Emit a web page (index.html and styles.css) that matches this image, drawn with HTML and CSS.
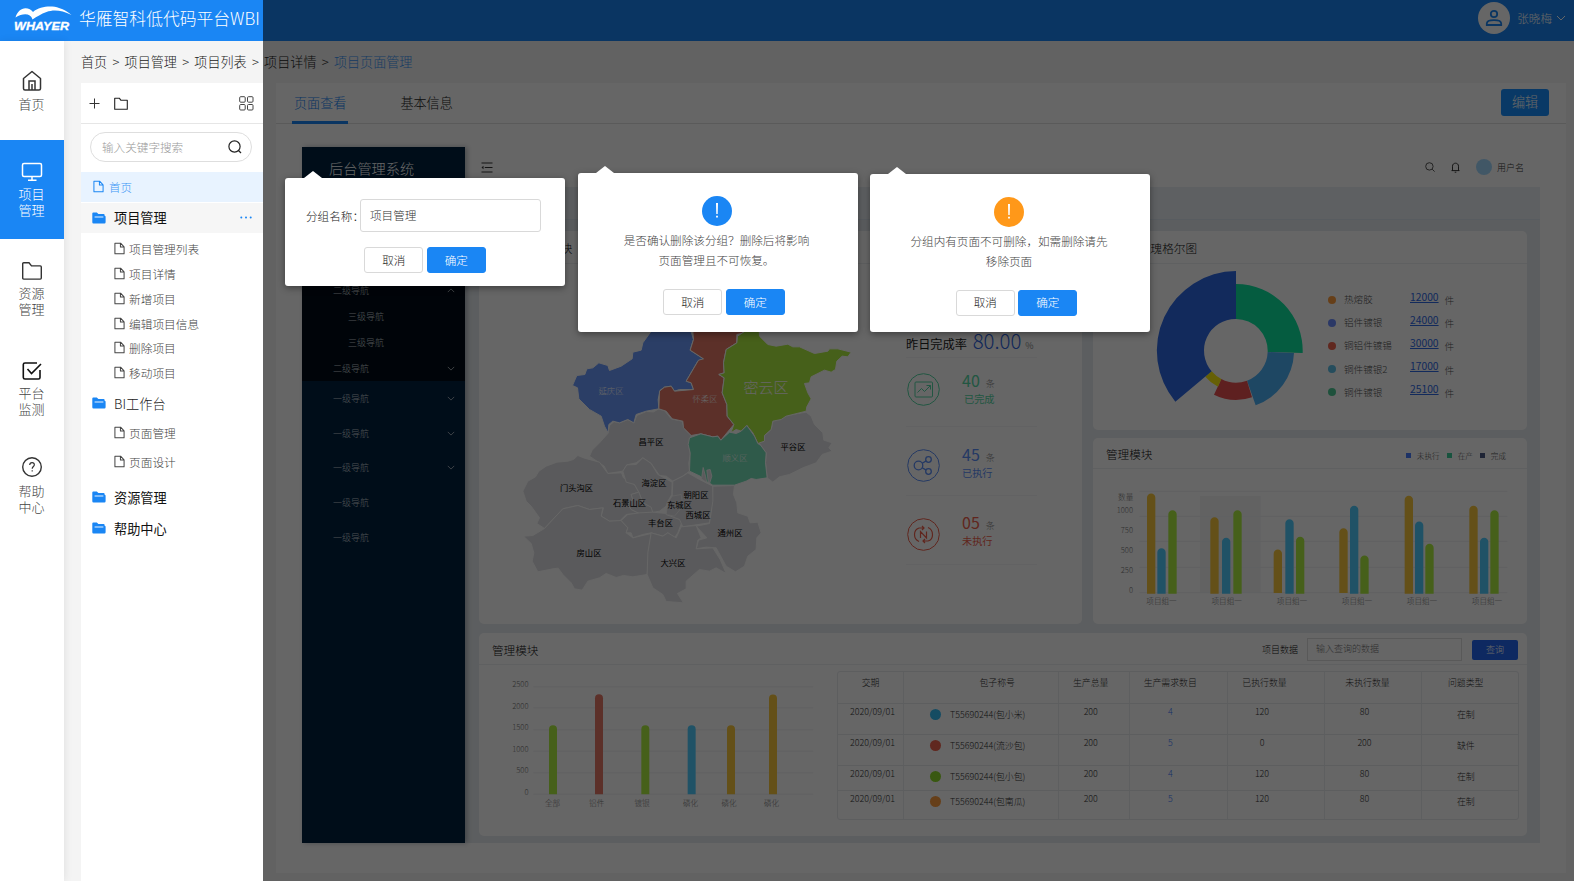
FILE: index.html
```html
<!DOCTYPE html>
<html lang="zh-CN">
<head>
<meta charset="utf-8">
<title>华雁智科低代码平台WBI</title>
<link rel="stylesheet" href="styles.css">
</head>
<body>
<svg class="defs" width="0" height="0" aria-hidden="true">
  <symbol id="doc" viewBox="0 0 12 14"><path d="M1 1.2h6.2l3.8 4v7.6H1zM7 1.4v4h4" fill="none" stroke="currentColor" stroke-width="1.1" stroke-linejoin="round"/></symbol>
  <symbol id="fold" viewBox="0 0 14 12"><path d="M.3 1.6Q.3.4 1.400.4h3.400l1.600 1.500h5.200q1 0 1 1v.8q1 0 1 1v5.600q0 1.200-1.200 1.200H1.500q-1.200 0-1.200-1.200z" fill="#1a86f4"/><path d="M2.600 5h8.800" stroke="#fff" stroke-width=".9"/></symbol>
  <symbol id="down" viewBox="0 0 10 6"><path d="M1 1l4 4 4-4" fill="none" stroke="currentColor" stroke-width="1"/></symbol>
</svg>
<div class="app">
  <header class="top">
    <svg class="logo" width="60" height="26" viewBox="0 0 60 26"><path d="M1.500 11.500C3 6 7 2.200 11.500 2.200c3 0 6 1.600 7.500 3.800C26 0 38-.5 45 2c5 1.500 9.500 4.200 12.500 7-10-5-18-5.500-25-3C27 8 23 10.500 18.500 13.500 16.500 7 9 7 1.500 11.500z" fill="#fff"/><text x="0" y="24" textLength="55" lengthAdjust="spacingAndGlyphs" class="logo-text">WHAYER</text></svg>
    <h1>华雁智科低代码平台WBI</h1>
    <div class="user">
      <span class="avatar"><svg width="18" height="18" viewBox="0 0 18 18" fill="none" stroke="#1a86f4" stroke-width="1.800"><circle cx="9" cy="5" r="3.200"/><path d="M1.800 16v-1.500c0-4.500 14.400-4.500 14.400 0V16z"/></svg></span>
      <span>张晓梅</span>
      <svg width="10" height="6"><use href="#down"/></svg>
    </div>
  </header>
  <div class="body">
    <nav class="rail">
      <a class="n1"><svg width="22" height="22" viewBox="0 0 22 22" fill="none" stroke="#333" stroke-width="1.500"><path d="M2.500 8.500L11 1.500l8.500 7V18.500q0 1.500-1.500 1.500H4q-1.500 0-1.500-1.500z" stroke-linejoin="round"/><path d="M8 20v-9h6v9M11 20v-6"/></svg><span>首页</span></a>
      <a class="on"><svg width="22" height="22" viewBox="0 0 22 22" fill="none" stroke="#fff" stroke-width="1.500"><rect x="1.500" y="2.500" width="19" height="13" rx="1.500"/><path d="M11 16v3M7 19.300h8.500"/></svg><span>项目<br>管理</span></a>
      <a class="n3"><svg width="22" height="22" viewBox="0 0 22 22" fill="none" stroke="#333" stroke-width="1.400"><path d="M1.700 3.700q0-1 1-1H8l2.500 3.200h8.800q1 0 1 1v11.200q0 1-1 1H2.700q-1 0-1-1z"/></svg><span>资源<br>管理</span></a>
      <a class="n4"><svg width="22" height="22" viewBox="0 0 22 22" fill="none" stroke="#111" stroke-width="1.600"><path d="M16 3H4Q2.300 3 2.300 4.500v13Q2.300 19 4 19h13.500q1.500 0 1.500-1.500V10M6.500 9l4 4.500L20 4"/></svg><span>平台<br>监测</span></a>
      <a class="n5"><svg width="22" height="22" viewBox="0 0 22 22" fill="none" stroke="#333" stroke-width="1.400"><circle cx="11" cy="11" r="9.300"/><path d="M8.700 9c.2-3.400 5-3 4.600 0-.2 1.500-2.100 1.600-2.100 3.800M11.200 14.200v1.400" stroke-width="1.200"/></svg><span>帮助<br>中心</span></a>
    </nav>
    <main>
      <div class="crumb"><span>首页</span><i>&gt;</i><span>项目管理</span><i>&gt;</i><span>项目列表</span><i>&gt;</i><span>项目详情</span><i>&gt;</i><span class="cur">项目页面管理</span></div>
      <div class="cols">
        <aside class="tree">
          <div class="tools">
            <svg width="11" height="11" viewBox="0 0 11 11" stroke="#333" stroke-width="1"><path d="M.500 5.500h10M5.500.500v10"/></svg>
            <svg class="t2" width="14" height="13" viewBox="0 0 14 13" fill="none" stroke="#222" stroke-width="1.100"><path d="M.700 1.200h4.600l1.500 2h6.500v9H.700z" stroke-linejoin="round"/></svg>
            <svg class="t3" width="15" height="15" viewBox="0 0 15 15" fill="none" stroke="#444" stroke-width="1"><rect x=".700" y=".700" width="5.500" height="5.500" rx="1"/><rect x="8.500" y=".700" width="5.500" height="5.500" rx="1"/><rect x=".700" y="8.500" width="5.500" height="5.500" rx="1"/><rect x="8.500" y="8.500" width="5.500" height="5.500" rx="1"/></svg>
          </div>
          <div class="search"><span>输入关键字搜索</span><svg width="14" height="14" viewBox="0 0 14 14" fill="none" stroke="#222" stroke-width="1.200"><circle cx="6.500" cy="6.500" r="5.600"/><path d="M10.500 10.500l2.500 2.500"/></svg></div>
          <div class="home"><svg width="11" height="13"><use href="#doc"/></svg>首页</div>
          <div class="folder hot"><svg width="14" height="12"><use href="#fold"/></svg>项目管理<svg class="more" width="12" height="3" viewBox="0 0 12 3" fill="#1a86f4"><circle cx="1.300" cy="1.500" r="1"/><circle cx="6" cy="1.500" r="1"/><circle cx="10.700" cy="1.500" r="1"/></svg></div>
          <ul class="leafs">
            <li><svg width="11" height="13"><use href="#doc"/></svg>项目管理列表</li>
            <li><svg width="11" height="13"><use href="#doc"/></svg>项目详情</li>
            <li><svg width="11" height="13"><use href="#doc"/></svg>新增项目</li>
            <li><svg width="11" height="13"><use href="#doc"/></svg>编辑项目信息</li>
            <li><svg width="11" height="13"><use href="#doc"/></svg>删除项目</li>
            <li><svg width="11" height="13"><use href="#doc"/></svg>移动项目</li>
          </ul>
          <div class="folder thin"><svg width="14" height="12"><use href="#fold"/></svg>BI工作台</div>
          <ul class="leafs wide">
            <li><svg width="11" height="13"><use href="#doc"/></svg>页面管理</li>
            <li><svg width="11" height="13"><use href="#doc"/></svg>页面设计</li>
          </ul>
          <div class="folder"><svg width="14" height="12"><use href="#fold"/></svg>资源管理</div>
          <div class="folder"><svg width="14" height="12"><use href="#fold"/></svg>帮助中心</div>
        </aside>
        <section class="page">
          <div class="tabs"><span class="tab on">页面查看</span><span class="tab">基本信息</span><button class="edit">编辑</button></div>
          <div class="dash">
            <div class="side">
              <h2>后台管理系统</h2>
              <div class="sub">
                <p>二级导航<svg class="up" width="8" height="5"><use href="#down"/></svg></p>
                <p class="deep">三级导航</p>
                <p class="deep">三级导航</p>
                <p>二级导航<svg width="8" height="5"><use href="#down"/></svg></p>
              </div>
              <p>一级导航<svg width="8" height="5"><use href="#down"/></svg></p>
              <p>一级导航<svg width="8" height="5"><use href="#down"/></svg></p>
              <p>一级导航<svg width="8" height="5"><use href="#down"/></svg></p>
              <p>一级导航</p>
              <p>一级导航</p>
            </div>
            <div class="work">
              <div class="bar">
                <svg width="12" height="11" viewBox="0 0 12 11" stroke="#333" stroke-width="1.100" fill="#333"><path d="M.500 1h11M3.800 5.500h7.700M.500 10h11"/><path d="M2.500 3.800v3.400L.500 5.500z" stroke="none"/></svg>
                <svg class="b1" width="10" height="10" viewBox="0 0 10 10" fill="none" stroke="#444" stroke-width=".9"><circle cx="4.400" cy="4.400" r="3.700"/><path d="M7.200 7.200L9.600 9.600"/></svg>
                <svg class="b2" width="9" height="11" viewBox="0 0 9 11" fill="none" stroke="#222" stroke-width=".9"><path d="M.500 8.600h8M1.500 8.500V4.200c0-4 6-4 6 0v4.300M3.700 10.200h1.600"/></svg>
                <i class="face"></i><span>用户名</span>
              </div>
              <div class="band"></div>
              <div class="cards">
                <section class="card area">
                  <h3 class="mapt">管理模块</h3>
                  <div class="arearow">
                    <svg class="map" width="390" height="355" viewBox="479 264 390 355">
                      <g transform="translate(499.500 319.500) scale(.33333)" stroke="#fff" stroke-width="3" stroke-linejoin="round" fill="#e1e1e5">
                        <path d="M270 410L278 392 300 370 325 342 330 318 344 306 360 310 385 300 403 310 412 288 440 276 462 277 478 268 495 273 515 298 548 305 555 328 575 348 568 375 573 405 568 430 570 455 550 470 520 485 500 470 480 468 455 432 430 415 410 430 382 436 370 455 325 462 314 440 292 425z"/>
                        <path d="M70 515L85 485 108 472 118 455 140 440 172 428 205 425 222 420 235 408 255 416 300 428 325 462 366 460 372 475 405 495 418 518 395 525 400 540 385 555 395 570 420 582 380 585 360 605 330 605 305 590 312 565 270 570 235 558 190 568 160 600 135 627 112 612 120 595 95 560 80 545z"/>
                        <path d="M72 650L100 648 135 627 160 600 190 568 235 558 270 570 310 565 305 590 330 605 365 603 385 625 380 640 400 655 455 642 450 680 443 765 400 772 372 768 350 774 320 762 300 775 265 785 248 812 225 808 215 790 190 765 176 746 160 748 115 757 98 725 103 700 95 672z"/>
                        <path d="M370 455L382 436 410 435 430 415 455 432 475 465 518 488 517 525 505 545 500 560 480 575 455 580 430 550 418 518 405 495 380 488z"/>
                        <path d="M395 525L418 518 430 550 455 563 460 580 420 582 395 570 385 555 400 540z"/>
                        <path d="M365 603L385 585 420 580 460 578 500 582 550 600 535 640 525 655 505 640 490 650 455 640 430 645 400 655 395 640 380 640 385 625z"/>
                        <path d="M520 485L550 470 565 460 600 480 640 500 642 545 630 610 550 622 540 600 500 585 505 550 518 530z"/>
                        <path d="M518 530L545 525 550 560 525 590 500 585 505 550z" stroke-width="2"/>
                        <path d="M640 500L705 498 702 525 712 550 715 580 745 590 752 610 775 608 785 640 772 655 770 690 745 710 735 740 708 757 680 740 650 685 620 683 590 688 597 662 622 655 590 620 630 612 640 545z"/>
                        <path d="M455 640L490 650 505 640 530 655 545 622 590 618 605 655 595 662 590 688 640 685 662 720 680 762 650 745 630 755 600 750 560 785 560 808 534 822 552 850 500 846 490 825 460 805 443 765 445 700z"/>
                        <path d="M780 372L795 348 815 330 820 305 860 288 920 278 935 290 945 315 970 340 973 362 998 370 988 385 998 395 968 405 950 430 910 445 870 465 840 472 820 488 803 475 798 430 800 400z"/>
                        <path fill="#6b9bff" d="M219 198L232 168 256 165 262 148 280 145 298 130 325 138 330 153 365 140 398 118 400 98 425 92 430 70 453 38 453 10 560 10 576 40 582 60 572 92 612 118 595 125 560 185 575 190 582 210 540 210 525 215 515 200 495 203 482 212 476 240 478 268 440 275 410 285 403 310 385 300 360 310 340 305 328 315 326 340 315 320 305 290 270 270 238 238 234 205z"/>
                        <path fill="#e67867" d="M578 10L735 10 735 40 712 45 712 70 680 90 672 130 674 160 658 165 674 175 668 220 682 255 683 290 703 315 664 362 655 350 640 352 604 343 575 348 552 325 550 305 518 298 500 275 478 268 480 215 495 203 515 200 525 215 582 210 575 190 560 185 597 122 612 118 572 92 582 60z"/>
                        <path fill="#aff043" d="M712 70L714 50 735 36 735 10 778 10 780 50 805 75 830 80 865 74 880 82 900 82 945 102 985 95 990 88 1015 88 1055 98 1045 112 1028 110 1012 125 1008 150 995 158 975 152 935 172 930 190 915 192 925 220 935 238 922 262 920 275 860 290 845 300 820 305 815 330 795 348 795 365 775 372 760 340 742 318 725 335 710 330 694 340 703 315 683 290 682 255 668 220 674 175 658 165 674 160 672 130 680 90z"/>
                        <path fill="#76e1b9" d="M570 355L604 343 640 352 655 350 664 362 690 338 710 342 725 335 742 318 765 350 775 372 784 378 800 400 798 430 803 475 770 480 755 477 740 485 705 497 640 497 628 490 610 480 602 470 570 455 572 400 566 375z"/>
                        <path d="M606 478L611 444 618 470 622 490zM622 452L632 450 637 470 630 493 626 485z" stroke-width="2.500"/>
                      </g>
                      <g class="mlabel">
                        <text x="611" y="393.500" class="lt">延庆区</text><text x="705" y="402" class="lt">怀柔区</text><text x="766" y="392.500" class="big">密云区</text><text x="735" y="461" class="lt">顺义区</text>
                        <text x="651" y="445">昌平区</text><text x="793" y="449.500">平谷区</text><text x="576.500" y="491">门头沟区</text><text x="654" y="486">海淀区</text><text x="629.500" y="505.500">石景山区</text><text x="696" y="497.500">朝阳区</text><text x="679.500" y="507.500">东城区</text><text x="698" y="518">西城区</text><text x="660.500" y="526">丰台区</text><text x="730" y="536">通州区</text><text x="589" y="555.500">房山区</text><text x="673" y="565.500">大兴区</text>
                      </g>
                    </svg>
                    <div class="stats">
                      <p class="rate">昨日完成率 <b>80.00</b> <small>%</small></p>
                      <div class="stat g"><svg width="33" height="33" viewBox="0 0 33 33" fill="none" stroke="currentColor"><circle cx="16.500" cy="16.500" r="15.800"/><rect x="8" y="9" width="17.500" height="15" rx="1"/><path d="M10.500 19.500l4-4 3 3 6-6M19.500 12.500h4v4"/></svg><div><b>40</b><small>条</small><em>已完成</em></div></div>
                      <div class="stat b"><svg width="33" height="33" viewBox="0 0 33 33" fill="none" stroke="currentColor"><circle cx="16.500" cy="16.500" r="15.800"/><g stroke-width="1.300"><circle cx="11.500" cy="16.500" r="4.300"/><circle cx="21.500" cy="10.500" r="2.800"/><circle cx="21.500" cy="22.500" r="2.800"/><path d="M15.200 14.300l4-2.400M15.200 18.700l4 2.400"/></g></svg><div><b>45</b><small>条</small><em>已执行</em></div></div>
                      <div class="stat r"><svg width="33" height="33" viewBox="0 0 33 33" fill="none" stroke="currentColor"><circle cx="16.500" cy="16.500" r="15.800"/><g stroke-width="1.200"><path d="M13.500 20v-6.500l6 6.500v-6.500M12 23.500C6 21 6 12 12 10h5M15 8l2 2-2 2M21 9.500c6 2.500 6 12 0 13.500h-5M18 21l-2 2 2 2"/></g></svg><div><b>05</b><small>条</small><em>未执行</em></div></div>
                    </div>
                  </div>
                </section>
                <div class="right">
                  <section class="card rose">
                    <h3>玫瑰格尔图</h3>
                    <div class="roserow">
                      <svg width="240" height="166" viewBox="1093 264 240 166"><g transform="translate(1090 220) scale(.33333)">
                        <path fill="#0de6a0" d="M438 192A200 200 0 0 1 638 399L533 396A95 95 0 0 0 438 297z"/>
                        <path fill="#4db1f7" d="M612 399A174 174 0 0 1 497 556L471 482A95 95 0 0 0 533 396z"/>
                        <path fill="#eb5052" d="M486 532A148 148 0 0 1 372 524L394 477A95 95 0 0 0 471 482z"/>
                        <path fill="#fff010" d="M384 500A121 121 0 0 1 346 470L365 454A95 95 0 0 0 394 477z"/>
                        <path fill="#2d69e6" d="M256 545A239 239 0 0 1 438 153L438 297A95 95 0 0 0 365 454z"/></g></svg>
                      <ul class="legend">
                        <li><i class="o"></i><span>热熔胶</span><u>12000</u><small>件</small></li>
                        <li><i class="bl"></i><span>铝件镀银</span><u>24000</u><small>件</small></li>
                        <li><i class="re"></i><span>铜铝件镀锡</span><u>30000</u><small>件</small></li>
                        <li><i class="cy"></i><span>铜件镀银2</span><u>17000</u><small>件</small></li>
                        <li><i class="gr"></i><span>铜件镀银</span><u>25100</u><small>件</small></li>
                      </ul>
                    </div>
                  </section>
                  <section class="card groups">
                    <h3>管理模块<span class="keys"><i class="k1"></i>未执行<i class="k2"></i>在产<i class="k3"></i>完成</span></h3>
                    <svg class="chart" width="434" height="155" viewBox="1093 469 434 155"><g transform="translate(1090 430) scale(.33333)">
                      <rect x="330" y="198" width="182" height="290" fill="#f5f5f6"/>
                      <path d="M148 184H1252M148 259H1252M148 334H1252M148 412H1252M148 488H1252" stroke="#f0f1f3" stroke-width="3"/>
                      <g fill="#fac83c"><path d="M171 491V203a12.500 12.500 0 0 1 25 0V491zM361 491V274a12.500 12.500 0 0 1 25 0V491zM551 489V371a12.500 12.500 0 0 1 25 0V489zM748 489V307a12.500 12.500 0 0 1 25 0V489zM944 491V210a12.500 12.500 0 0 1 25 0V491zM1138 491V240a12.500 12.500 0 0 1 25 0V491z"/></g>
                      <g fill="#52cdff"><path d="M202 491V367a12.500 12.500 0 0 1 25 0V491zM396 491V336a12.500 12.500 0 0 1 25 0V491zM586 491V280a12.500 12.500 0 0 1 25 0V491zM780 491V240a12.500 12.500 0 0 1 25 0V491zM975 491V287a12.500 12.500 0 0 1 25 0V491zM1170 491V336a12.500 12.500 0 0 1 25 0V491z"/></g>
                      <g fill="#aff043"><path d="M235 491V253a12.500 12.500 0 0 1 25 0V491zM430 491V253a12.500 12.500 0 0 1 25 0V491zM618 491V333a12.500 12.500 0 0 1 25 0V491zM811 491V389a12.500 12.500 0 0 1 25 0V491zM1006 491V354a12.500 12.500 0 0 1 25 0V491zM1201 491V253a12.500 12.500 0 0 1 25 0V491z"/></g></g>
                      <g class="ax end"><text x="1133.300" y="500">数量</text><text x="1133" y="512.500">1000</text><text x="1133" y="533">750</text><text x="1133" y="553">500</text><text x="1133" y="573">250</text><text x="1133" y="593">0</text></g>
                      <g class="ax mid"><text x="1161.500" y="604">项目组一</text><text x="1226.700" y="604">项目组一</text><text x="1292" y="604">项目组一</text><text x="1357" y="604">项目组一</text><text x="1422" y="604">项目组一</text><text x="1487" y="604">项目组一</text></g>
                    </svg>
                  </section>
                </div>
                <section class="card orders">
                  <h3>管理模块<span class="query">项目数据<span class="qin">输入查询的数据</span><span class="qbtn">查询</span></span></h3>
                  <div class="orderrow">
                    <svg class="chart" width="359" height="170" viewBox="479 666 359 170"><g transform="translate(470 620.500) scale(.33333)">
                      <path d="M190 202H1030M190 265H1030M190 331H1030M190 395H1030M190 460H1030M190 524H1030" stroke="#f0f1f3" stroke-width="3"/>
                      <path fill="#aff043" d="M237 524V329a12 12 0 0 1 24 0V524zM514 524V329a12 12 0 0 1 24 0V524z"/><path fill="#e67867" d="M375 524V236a12 12 0 0 1 24 0V524z"/><path fill="#52cdff" d="M653 524V329a12 12 0 0 1 24 0V524z"/><path fill="#fac83c" d="M771 524V329a12 12 0 0 1 24 0V524zM897 524V237a12 12 0 0 1 24 0V524z"/></g>
                      <g class="ax end"><text x="528.500" y="688">2500</text><text x="528.500" y="709.500">2000</text><text x="528.500" y="731">1500</text><text x="528.500" y="752.500">1000</text><text x="528.500" y="774">500</text><text x="528.500" y="796">0</text></g>
                      <g class="ax mid"><text x="552.500" y="806.500">全部</text><text x="596.700" y="806.500">铝件</text><text x="642" y="806.500">镀银</text><text x="690.500" y="806.500">磷化</text><text x="729" y="806.500">磷化</text><text x="771.500" y="806.500">磷化</text></g>
                    </svg>
                    <div class="grid">
                      <div class="tr th"><span>交期</span><span class="hn">包子称号</span><span>生产总量</span><span>生产需求数目</span><span>已执行数量</span><span>未执行数量</span><span>问题类型</span></div>
                      <div class="tr"><span>2020/09/01</span><span class="nm"><i class="cb"></i>T55690244(包小米)</span><span>200</span><span class="lk">4</span><span>120</span><span>80</span><span class="st">在制</span></div>
                      <div class="tr"><span>2020/09/01</span><span class="nm"><i class="re"></i>T55690244(流沙包)</span><span>200</span><span class="lk">5</span><span>0</span><span>200</span><span class="st">缺件</span></div>
                      <div class="tr"><span>2020/09/01</span><span class="nm"><i class="lg"></i>T55690244(包小包)</span><span>200</span><span class="lk">4</span><span>120</span><span>80</span><span class="st">在制</span></div>
                      <div class="tr"><span>2020/09/01</span><span class="nm"><i class="o"></i>T55690244(包南瓜)</span><span>200</span><span class="lk">5</span><span>120</span><span>80</span><span class="st">在制</span></div>
                    </div>
                  </div>
                </section>
              </div>
            </div>
          </div>
        </section>
      </div>
    </main>
  </div>
  <div class="mask"></div>
  <div class="pop p1">
    <div class="field"><label>分组名称：</label><span class="inp">项目管理</span></div>
    <div class="btns"><button>取消</button><button class="ok">确定</button></div>
  </div>
  <div class="pop p2">
    <span class="mark"><svg width="30" height="30" viewBox="0 0 30 30" fill="#fff"><path d="M14 7h2l-.300 11h-1.400zM14.100 19.800h1.800v1.800h-1.800z"/></svg></span>
    <p>是否确认删除该分组？删除后将影响<br>页面管理且不可恢复。</p>
    <div class="btns"><button>取消</button><button class="ok">确定</button></div>
  </div>
  <div class="pop p3">
    <span class="mark warn"><svg width="30" height="30" viewBox="0 0 30 30" fill="#fff"><path d="M14 7h2l-.300 11h-1.400zM14.100 19.800h1.800v1.800h-1.800z"/></svg></span>
    <p>分组内有页面不可删除，如需删除请先<br>移除页面</p>
    <div class="btns"><button>取消</button><button class="ok">确定</button></div>
  </div>
</div>
</body>
</html>
```
FILE: styles.css
```css
* { box-sizing: border-box; margin: 0; padding: 0; }
body { font-family: "Noto Sans CJK SC", "Noto Sans", sans-serif; font-weight: 300; color: #333; font-size: 13.1px; }
ul { list-style: none; }
i, em { font-style: normal; }
svg { flex: none; display: block; }
.defs { position: absolute; }
button { font: inherit; }
.app { position: relative; width: 1574px; height: 881px; overflow: hidden; background: #f4f4f4; display: flex; flex-direction: column; }

.top { height: 41px; flex: none; background: #1a86f4; color: #fff; display: flex; align-items: center; padding: 0 8px 0 14px; }
.logo { margin-top: -3px; }
.logo-text { font: italic bold 10.5px "Liberation Sans", sans-serif; fill: #fff; stroke: #fff; stroke-width: .3; }
.top h1 { font-size: 16.8px; font-weight: 300; margin: -5px 0 0 5px; line-height: 24px; white-space: nowrap; }
.user { margin: -5px 0 0 auto; display: flex; align-items: center; font-size: 11.6px; }
.avatar { width: 32px; height: 32px; border-radius: 50%; background: #fff; display: flex; align-items: center; justify-content: center; margin-right: 7px; }
.user > svg { margin-left: 4px; }

.body { flex: 1; display: flex; min-height: 0; }
.rail { width: 64px; flex: none; background: #fff; box-shadow: 1px 0 8px rgba(0,0,0,.08); }
.rail a { height: 99px; padding: 21px 1px 0 0; display: flex; flex-direction: column; align-items: center; font-size: 13px; line-height: 16.4px; color: #444; }
.rail a span { margin-top: 3px; }
.rail .n1 { padding-top: 29px; }
.rail .n1 span { margin-top: 4px; }
.rail .on { background: #1a86f4; color: #fff; }
.rail .n3 { height: 100px; }
.rail .n4 { height: 96px; }
.rail .n5 span { margin-top: 5px; }

main { flex: 1; padding: 0 8px 8px 17px; display: flex; flex-direction: column; min-width: 0; }
.crumb { height: 42px; display: flex; align-items: center; line-height: 20px; color: #222; white-space: nowrap; }
.crumb i { margin: 0 5.2px; }
.crumb .cur { color: #3c96f5; }
.cols { flex: 1; display: flex; gap: 13px; min-height: 0; }

.tree { width: 182px; flex: none; background: #fff; margin-bottom: -8px; }
.tools { height: 41px; border-bottom: 1px solid #e6e6e6; display: flex; align-items: center; padding: 0 9.5px 0 7.5px; }
.t2 { margin-left: 14px; }
.t3 { margin-left: auto; }
.search { margin: 8px 11px 0 9px; height: 30px; border: 1px solid #dedede; border-radius: 15px; display: flex; align-items: center; justify-content: space-between; padding: 0 9px 0 11px; color: #999; font-size: 11.6px; }
.home { margin-top: 10px; height: 30px; background: #e8f3ff; color: #3c96f5; font-size: 11.5px; display: flex; align-items: center; gap: 5px; padding: 0 0 1px 12px; }
.home svg { color: #1a86f4; }
.folder { height: 30px; margin-top: 1px; display: flex; align-items: center; gap: 8px; padding: 0 11px 1px; font-weight: 400; font-size: 13.2px; color: #111; }
.hot { background: #f6f6f6; margin-top: 1px; }
.more { margin-left: auto; }
.leafs { padding: 4px 0 3px; }
.leafs li { height: 24.75px; padding: 0 0 1px 33px; display: flex; align-items: center; gap: 4px; font-size: 11.7px; color: #444; }
.thin { font-weight: 300; color: #222; margin-top: 0; }
.wide { padding: 0 0 5px; }
.wide li { height: 29.2px; }

.page { flex: 1; background: #fff; min-width: 0; }
.tabs { height: 41px; border-bottom: 1px solid #e2e2e2; display: flex; align-items: center; padding: 0 17px 0 16px; }
.tab { height: 41px; line-height: 40px; padding: 0 2px; margin-right: 50px; color: #222; }
.tab.on { color: #1a86f4; border-bottom: 3px solid #1a86f4; }
.edit { margin-left: auto; margin-top: -2px; width: 48px; height: 27px; border: 0; border-radius: 3px; background: #1890ff; color: #fff; line-height: 26px; }

.dash { margin: 23px 26px 0; height: 696px; display: flex; }
.side { width: 163px; flex: none; background: #002140; color: #bfc5cc; font-size: 9px; box-shadow: 2px 0 5px rgba(0,21,41,.3); z-index: 1; }
.side h2 { font-size: 14.2px; font-weight: 300; color: #fff; padding-left: 27px; line-height: 20px; height: 130px; padding-top: 11px; }
.side p { height: 34.7px; padding: 0 10px 0 31px; display: flex; align-items: center; justify-content: space-between; }
.sub { background: #000c17; height: 104px; }
.side .sub p { height: 26px; }
.side .sub .deep { padding-left: 46px; }
.up { transform: scaleY(-1); }
.work { flex: 1; display: flex; flex-direction: column; background: #e6ebef; min-width: 0; }
.bar { height: 40px; background: #fff; display: flex; align-items: center; padding: 0 16px; font-size: 9px; }
.b1 { margin-left: auto; }
.b2 { margin: 0 16px; }
.face { width: 16px; height: 16px; border-radius: 50%; background: #a4daff; margin-right: 5px; }
.band { height: 33px; background: #ebeff5; border-bottom: 1px solid #dce6ef; }
.cards { padding: 11px 13px 7px 14px; display: grid; grid-template-columns: 603px 434px; grid-template-rows: 393px 203px; gap: 9px 11px; }
.card { background: #fff; border-radius: 5px; min-width: 0; }
.card h3 { font-size: 11.6px; font-weight: 300; color: #111; height: 33px; line-height: 34px; border-bottom: 1px solid #edf0f2; padding-left: 13px; display: flex; }
.card .mapt { padding-left: 47px; }
.arearow { display: flex; }
.mlabel { font-size: 8.3px; fill: #000; text-anchor: middle; font-weight: 400; }
.mlabel .lt { fill: #fff; font-weight: 300; }
.mlabel .big { fill: #fff; font-size: 15px; font-weight: 300; }
.stats { margin-left: 37px; width: 131px; }
.rate { height: 94px; padding-top: 62px; border-bottom: 1px solid #f4f6f7; white-space: nowrap; font-size: 12.2px; line-height: 28px; color: #222; font-weight: 400; }
.rate b { font-size: 20.4px; font-weight: 300; color: #2d64e0; margin-left: 3px; }
.rate small { font-size: 9px; color: #888; margin-left: 1px; }
.stat { height: 69px; border-bottom: 1px solid #f4f6f7; display: flex; padding: 22px 0 0 1px; gap: 22px; }
.stat div { margin-top: -3px; }
.stat.g { padding-top: 15px; color: #55d8a5; }
.stat.g div { margin-top: -1px; }
.stat.g em { margin-left: 2px; }
.stat.b { color: #5b8ff9; }
.stat.r { color: #f0604c; }
.stat.r div { margin-top: -4px; }
.stat b { font-size: 16px; font-weight: 400; line-height: 17px; display: inline-block; margin-right: 6px; }
.stat small { font-size: 9px; color: #888; }
.stat em { display: block; font-size: 10.2px; line-height: 15px; font-weight: 400; }
.right { display: grid; grid-template-rows: 199px 186px; gap: 8px; }
.rose h3 { padding-left: 46px; }
.roserow { display: flex; }
.legend { margin-top: 23.5px; }
.legend li { height: 23.2px; display: grid; grid-template-columns: 15px 67px 34.5px 20px; font-size: 9.6px; align-items: center; color: #555; white-space: nowrap; margin-left: -5px; }
.legend i { width: 8px; height: 8px; border-radius: 50%; margin-top: 1px; }
.legend span { padding-left: 1px; }
.legend u { color: #2d69e6; font-size: 10.3px; font-weight: 400; margin-top: -6px; }
.legend small { font-size: 9.6px; margin-top: 2px; }
.o { background: #ff9f40; } .bl { background: #6b8cff; } .re { background: #f0644f; } .cy { background: #5cc0e8; } .gr { background: #4dcb96; } .cb { background: #36bdf5; } .lg { background: #90dc2c; }
.groups h3 { height: 31px; line-height: 33px; }
.keys { margin-left: auto; padding-right: 21px; display: flex; align-items: center; font-size: 7.6px; color: #555; padding-top: 4px; }
.keys i { width: 5px; height: 5px; margin: 0 6px 0 7px; }
.k1 { background: #4a7dff; } .k2 { background: #3ecf9b; } .k3 { background: #4d5a85; }
.ax { font-size: 7.6px; fill: #777; }
.end { text-anchor: end; }
.mid { text-anchor: middle; }
.orders { grid-column: 1 / 3; width: 1048px; }
.orders h3 { height: 32px; }
.query { margin-left: auto; display: flex; align-items: center; font-size: 9px; padding: 2px 9px 0 0; }
.qin { width: 155px; height: 23px; line-height: 20px; border: 1px solid #dedede; margin: 0 10px 0 9px; padding-left: 8px; color: #777; }
.qbtn { width: 46px; height: 20px; line-height: 20px; background: #2468f2; border-radius: 2px; color: #fff; text-align: center; }
.orderrow { display: flex; }
.grid { width: 682px; height: 149px; margin: 6px 0 0 -1px; border: 1px solid #e8ebee; border-radius: 3px; font-size: 8.9px; color: #333; overflow: hidden; }
.tr { display: grid; grid-template-columns: 66px 154.5px 71.5px 97.5px 97px 97px 1fr; height: 31px; line-height: 12px; }
.tr + .tr { border-top: 1px solid #e8ebee; }
.tr:nth-child(4) { height: 25px; }
.tr span { border-right: 1px solid #eaedf0; text-align: center; padding-top: 2px; }
.tr span:last-child { border-right: 0; padding-right: 8px; }
.tr:not(.th) span:first-child { padding-left: 4px; }
.tr span:nth-child(3) { padding-right: 6px; }
.tr span:nth-child(4) { padding-right: 16px; }
.tr span:nth-child(5) { padding-right: 27px; }
.tr span:nth-child(6) { padding-right: 16px; }
.tr.th span:nth-child(5) { padding-right: 22px; }
.tr.th span:nth-child(6) { padding-right: 10px; }
.th span { padding-top: 5px; }
.tr .hn { padding-left: 33px; }
.tr .st { padding-top: 5px; }
.tr .nm { display: flex; padding: 5px 0 0 26px; text-align: left; }
.nm i { width: 11px; height: 11px; border-radius: 50%; margin-right: 9px; }
.tr .lk { color: #3c78ff; }

.mask { position: absolute; left: 262.5px; top: 0; right: 0; bottom: 0; background: rgba(0,0,0,.6); z-index: 2; }
.pop { position: absolute; z-index: 3; width: 280px; background: #fff; border-radius: 3px; box-shadow: 0 2px 7px rgba(0,0,0,.4); display: flex; flex-direction: column; align-items: center; font-size: 11.6px; }
.pop::before { content: ""; position: absolute; left: 19px; top: -7px; border: solid transparent; border-width: 0 9px 7px; border-bottom-color: #fff; }
.p1 { left: 285px; top: 178px; height: 108px; padding-top: 21px; }
.p2 { left: 577.5px; top: 173px; height: 158.5px; padding: 23px 2px 0 0; }
.p3 { left: 870px; top: 173.5px; height: 158.5px; padding: 23px 2px 0 0; }
.p2::before, .p3::before { left: 18px; }
.field { display: flex; align-items: center; width: 238px; }
.field label { width: 54px; flex: none; white-space: nowrap; color: #222; }
.inp { width: 181px; height: 33px; border: 1px solid #d9d9d9; border-radius: 3px; line-height: 30px; padding-left: 9px; }
.btns { display: flex; gap: 3.5px; margin: 15px 0 0 0; }
.btns button { width: 59px; height: 26px; border: 1px solid #d9d9d9; border-radius: 3px; background: #fff; line-height: 23px; color: #222; }
.btns .ok { background: #1a86f4; border-color: #1a86f4; color: #fff; }
.p2 .btns, .p3 .btns { margin: 19px 0 0 15px; }
.mark { width: 30px; height: 30px; border-radius: 50%; background: #1a86f4; }
.warn { background: #ff9819; }
.pop p { text-align: center; line-height: 20px; color: #444; margin-top: 4px; }
```
